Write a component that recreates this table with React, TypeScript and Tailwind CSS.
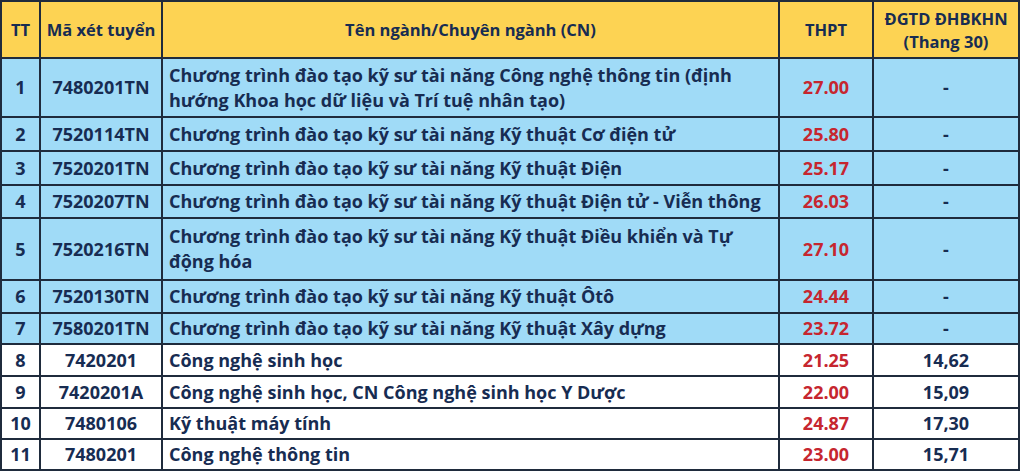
const rows = [
  { tt: "1", code: "7480201TN", name: "Chương trình đào tạo kỹ sư tài năng Công nghệ thông tin (định hướng Khoa học dữ liệu và Trí tuệ nhân tạo)", thpt: "27.00", dg: "-", blue: true, h: "h-[59px]" },
  { tt: "2", code: "7520114TN", name: "Chương trình đào tạo kỹ sư tài năng Kỹ thuật Cơ điện tử", thpt: "25.80", dg: "-", blue: true, h: "h-[34px]" },
  { tt: "3", code: "7520201TN", name: "Chương trình đào tạo kỹ sư tài năng Kỹ thuật Điện", thpt: "25.17", dg: "-", blue: true, h: "h-[34px]" },
  { tt: "4", code: "7520207TN", name: "Chương trình đào tạo kỹ sư tài năng Kỹ thuật Điện tử - Viễn thông", thpt: "26.03", dg: "-", blue: true, h: "h-[33px]" },
  { tt: "5", code: "7520216TN", name: "Chương trình đào tạo kỹ sư tài năng Kỹ thuật Điều khiển và Tự động hóa", thpt: "27.10", dg: "-", blue: true, h: "h-[62px]" },
  { tt: "6", code: "7520130TN", name: "Chương trình đào tạo kỹ sư tài năng Kỹ thuật Ôtô", thpt: "24.44", dg: "-", blue: true, h: "h-[33px]" },
  { tt: "7", code: "7580201TN", name: "Chương trình đào tạo kỹ sư tài năng Kỹ thuật Xây dựng", thpt: "23.72", dg: "-", blue: true, h: "h-[31px]" },
  { tt: "8", code: "7420201", name: "Công nghệ sinh học", thpt: "21.25", dg: "14,62", blue: false, h: "h-[32px]" },
  { tt: "9", code: "7420201A", name: "Công nghệ sinh học, CN Công nghệ sinh học Y Dược", thpt: "22.00", dg: "15,09", blue: false, h: "h-[32px]" },
  { tt: "10", code: "7480106", name: "Kỹ thuật máy tính", thpt: "24.87", dg: "17,30", blue: false, h: "h-[31px]" },
  { tt: "11", code: "7480201", name: "Công nghệ thông tin", thpt: "23.00", dg: "15,71", blue: false, h: "h-[31px]" },
];

const cell = "border-2 border-[#1f2b3c] px-[6px] py-0";

export default function App() {
  return (
    <div className="w-[1020px] h-[471px] bg-white overflow-hidden font-['Open_Sans',sans-serif] text-[#172c52]">
      <table className="w-[1018px] border-collapse table-fixed font-bold text-[18px] leading-[25px]">
        <colgroup>
          <col className="w-[39px]" />
          <col className="w-[122px]" />
          <col className="w-[617px]" />
          <col className="w-[94px]" />
          <col className="w-[146px]" />
        </colgroup>
        <thead>
          <tr className="h-[57px] bg-[#fdd353] text-[16.5px] leading-[23px]">
            <th className={`${cell} text-center`}>TT</th>
            <th className={`${cell} !px-0 text-center whitespace-nowrap`}>Mã xét tuyển</th>
            <th className={`${cell} text-center`}>Tên ngành/Chuyên ngành (CN)</th>
            <th className={`${cell} text-center`}>THPT</th>
            <th className={`${cell} text-center`}>
              ĐGTD ĐHBKHN
              <br />
              (Thang 30)
            </th>
          </tr>
        </thead>
        <tbody>
          {rows.map((r) => (
            <tr key={r.tt} className={`${r.h} ${r.blue ? "bg-[#a0dbf7]" : "bg-white"}`}>
              <td className={`${cell} text-center`}>{r.tt}</td>
              <td className={`${cell} text-center`}>{r.code}</td>
              <td className={`${cell} text-left`}>{r.name}</td>
              <td className={`${cell} text-center text-[#c6262f]`}>{r.thpt}</td>
              <td className={`${cell} text-center`}>{r.dg}</td>
            </tr>
          ))}
        </tbody>
      </table>
    </div>
  );
}
